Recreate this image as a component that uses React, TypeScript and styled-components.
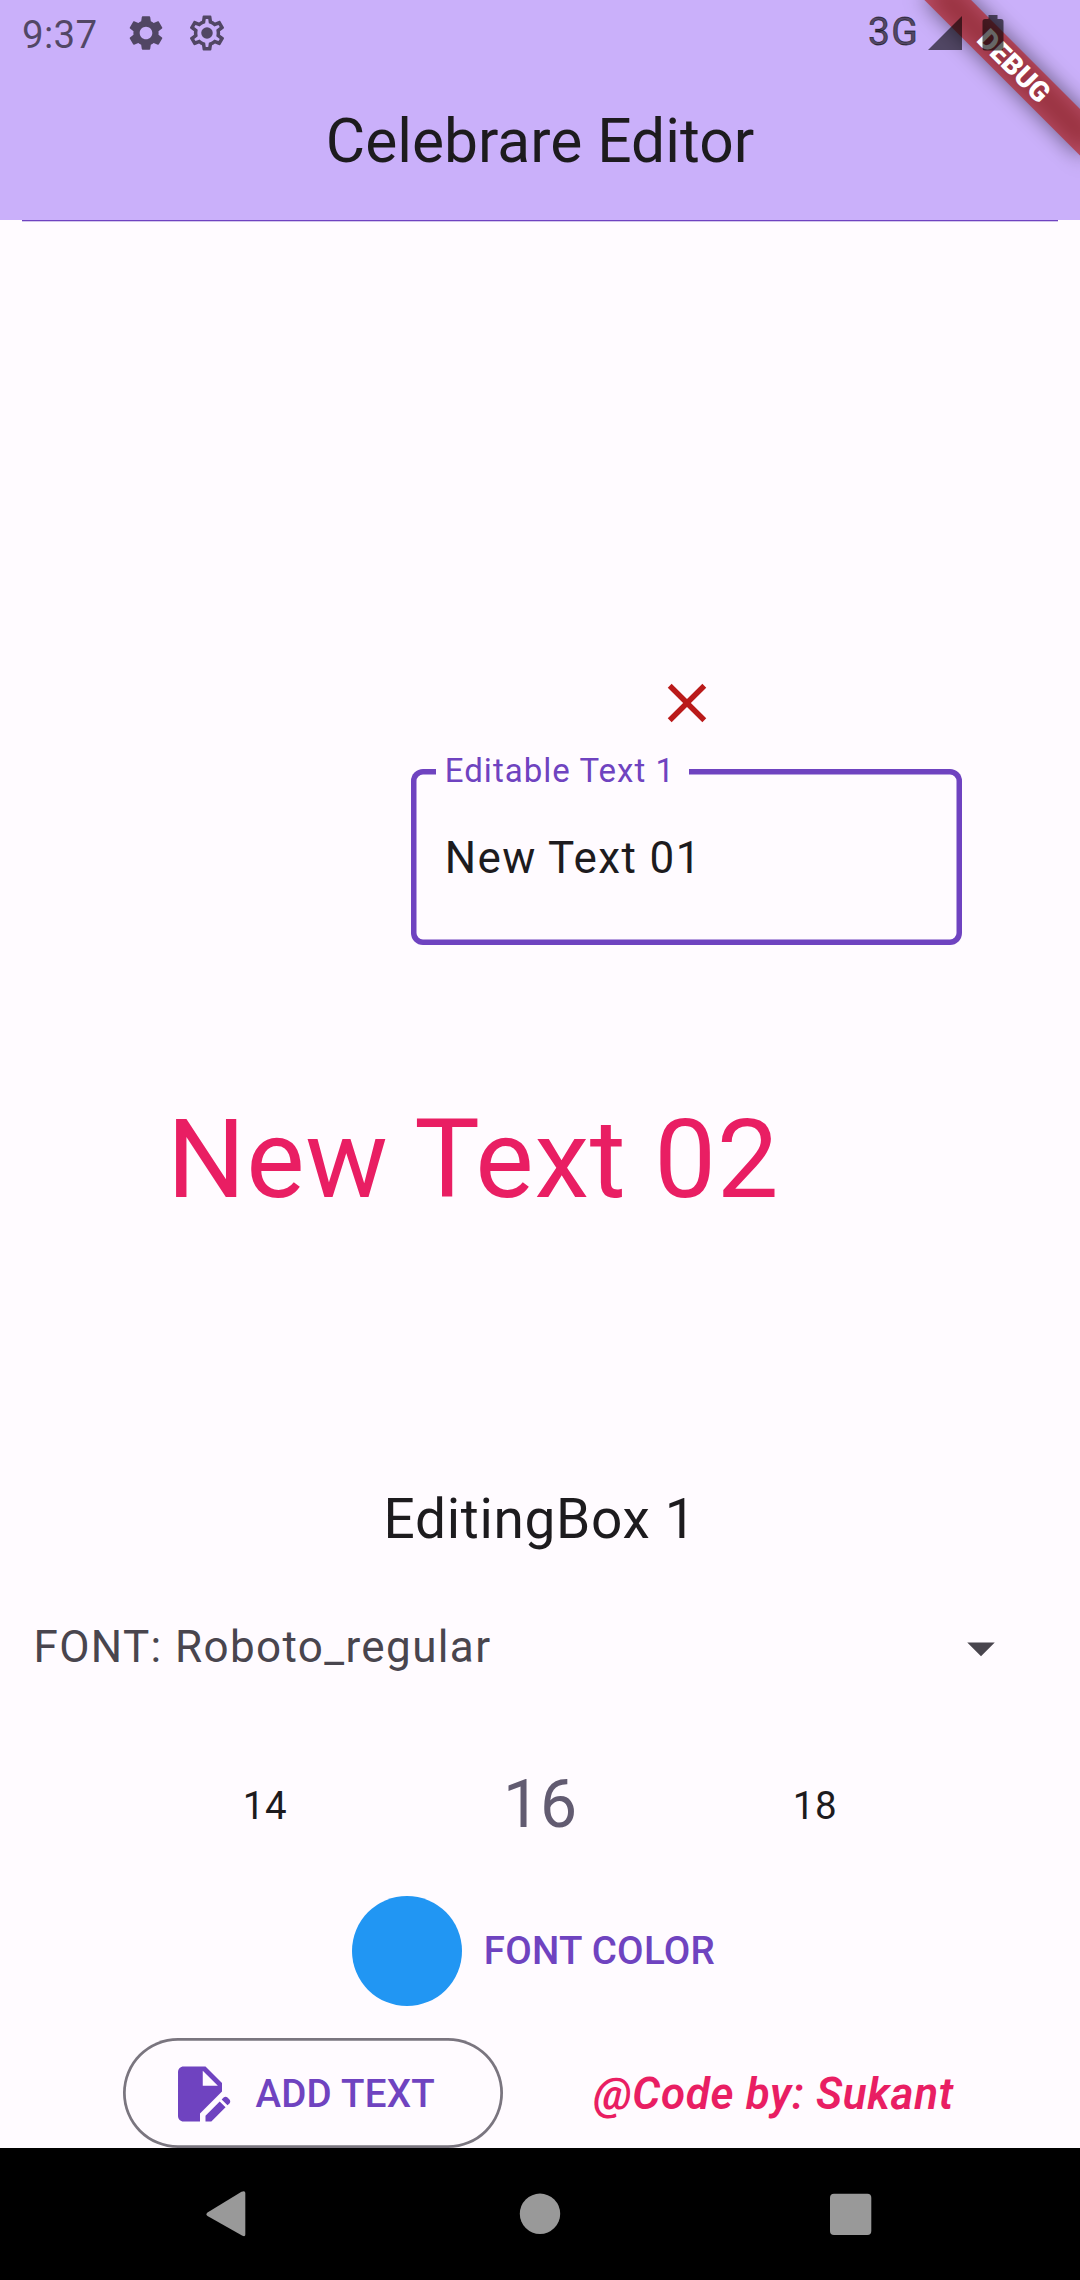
import React from "react";
import styled, { createGlobalStyle } from "styled-components";

const primary = "#6f43c0";
const ink = "#1d1b1e";
const system = "rgba(0, 0, 0, 0.6)";

const GlobalStyle = createGlobalStyle`
  * { box-sizing: border-box; }
  body { margin: 0; background: #fffbff; }
`;

const Screen = styled.div`
  position: relative;
  width: 1080px;
  height: 2280px;
  display: flex;
  flex-direction: column;
  overflow: hidden;
  background: #fffbff;
  color: ${ink};
  font-family: Roboto, "Liberation Sans", sans-serif;
`;

const Header = styled.header`
  height: 220px;
  flex: none;
  display: flex;
  flex-direction: column;
  background: #cab0fa;
`;

const StatusBar = styled.div`
  position: relative;
  z-index: 3;
  height: 66px;
  display: flex;
  align-items: flex-start;
  padding: 0 76px 0 22px;
  color: ${system};
`;

const Clock = styled.span`
  width: 103px;
  line-height: 69px;
  font-size: 38.5px;
  letter-spacing: 0.3px;
`;

const StatusIcon = styled.svg`
  width: 42px;
  height: 42px;
  margin: 12.4px 19px 0 0;
  fill: currentColor;
`;

const Network = styled.span`
  margin-left: auto;
  margin-right: 9px;
  line-height: 65px;
  font-size: 39px;
  letter-spacing: 1.2px;
  -webkit-text-stroke: 0.8px currentColor;
`;

const Signal = styled.svg`
  width: 34px;
  height: 34px;
  margin: 16px 20px 0 0;
  fill: currentColor;
`;

const Battery = styled.svg`
  width: 22px;
  height: 36px;
  margin-top: 15px;
  fill: currentColor;
`;

const Title = styled.h1`
  margin: 0;
  line-height: 152px;
  text-align: center;
  font-size: 60.5px;
  font-weight: 400;
`;

const Ribbon = styled.div`
  position: absolute;
  z-index: 2;
  left: 970px;
  top: 77px;
  width: 220px;
  height: 33px;
  transform-origin: 110px -77px;
  transform: rotate(45deg);
`;

const RibbonShadow = styled.div`
  position: absolute;
  inset: 0;
  background: rgba(0, 0, 0, 0.5);
  filter: blur(10.9px);
`;

const RibbonLabel = styled.div`
  position: relative;
  height: 33px;
  line-height: 33px;
  text-align: center;
  color: #fff;
  background: rgba(183, 28, 28, 0.63);
  font-size: 28.05px;
  font-weight: 900;
`;

const Divider = styled.div`
  flex: none;
  height: 2px;
  margin: 0 22px;
  background: linear-gradient(${primary} 50%, #d4c5ed 50%);
`;

const Canvas = styled.main`
  position: relative;
  flex: none;
  height: 1258px;
`;

const Removable = styled.div`
  position: absolute;
  left: 411.25px;
  top: 448px;
  width: 550.5px;
  display: flex;
  flex-direction: column;
  align-items: center;
  gap: 33px;
`;

const ClearIcon = styled.svg`
  width: 66px;
  height: 66px;
  fill: #ba1a1a;
`;

const Field = styled.div`
  position: relative;
  width: 100%;
  height: 176px;
  box-shadow: inset 0 0 0 5.5px ${primary};
  border-radius: 12px;
  padding: 0 33.5px;
  line-height: 179px;
  font-size: 44px;
  letter-spacing: 1.375px;
`;

const FieldLabel = styled.span`
  position: absolute;
  left: 25px;
  top: -16px;
  width: 253px;
  padding-left: 8.5px;
  line-height: 36px;
  white-space: nowrap;
  background: #fffbff;
  color: ${primary};
  font-size: 33px;
  letter-spacing: 1.03px;
`;

const CanvasText = styled.span`
  position: absolute;
  left: 167px;
  top: 873px;
  line-height: 130px;
  white-space: nowrap;
  color: #e91e63;
  font-size: 110px;
  letter-spacing: 0.69px;
`;

const Panel = styled.section`
  flex: none;
  height: 668px;
  display: flex;
  flex-direction: column;
`;

const PanelTitle = styled.h2`
  margin: 0 0 23px;
  line-height: 78px;
  text-align: center;
  font-size: 55px;
  font-weight: 400;
  letter-spacing: 0.69px;
`;

const FontSelect = styled.div`
  height: 132px;
  padding: 0 66px 0 33.5px;
  display: flex;
  align-items: center;
  justify-content: space-between;
  color: #49454e;
  font-size: 44px;
  letter-spacing: 1.375px;
`;

const ArrowIcon = styled.svg`
  width: 66px;
  height: 66px;
  margin-top: 2px;
  fill: #49454e;
`;

const SizePicker = styled.div`
  width: 825px;
  height: 182px;
  margin: 0 auto;
  display: grid;
  grid-template-columns: repeat(3, 1fr);
`;

const Size = styled.span<{ $active?: boolean }>`
  text-align: center;
  line-height: ${(p) => (p.$active ? "184px" : "186px")};
  color: ${(p) => (p.$active ? "#625b71" : ink)};
  font-size: ${(p) => (p.$active ? "66px" : "38.5px")};
  letter-spacing: ${(p) => (p.$active ? "0" : "0.69px")};
`;

const ColorRow = styled.div`
  height: 110px;
  margin-bottom: 33px;
  padding-left: 351.7px;
  display: flex;
  align-items: center;
  gap: 22px;
`;

const Swatch = styled.span`
  width: 110px;
  height: 110px;
  margin-top: 1.4px;
  border-radius: 50%;
  background: #2196f3;
`;

const ButtonLabel = styled.span`
  line-height: 110px;
  padding-top: 2px;
  color: ${primary};
  font-size: 38.5px;
  font-weight: 500;
  letter-spacing: 0.275px;
`;

const Footer = styled.div`
  height: 110px;
  padding-left: 123.4px;
  display: flex;
  align-items: center;
`;

const AddButton = styled.button`
  width: 379.5px;
  height: 110px;
  margin: 0.8px 90.5px 0 0;
  padding: 0 0 0 44px;
  display: flex;
  align-items: center;
  gap: 22px;
  border: none;
  box-shadow: inset 0 0 0 2.75px #7a757f;
  border-radius: 55px;
  background: none;
  font-family: inherit;
`;

const EditIcon = styled.svg`
  width: 66px;
  height: 66px;
  margin-top: 0.5px;
  fill: ${primary};
`;

const Credit = styled.span`
  line-height: 110px;
  padding-top: 2px;
  white-space: nowrap;
  color: #e91e63;
  font-size: 44px;
  font-style: italic;
  font-weight: 600;
  letter-spacing: 0.69px;
`;

const NavBar = styled.nav`
  position: relative;
  flex: none;
  height: 132px;
  padding: 0 206px;
  display: flex;
  align-items: center;
  justify-content: space-between;
  background: #000;
`;

const NavIcon = styled.svg`
  width: 46px;
  height: 46px;
  fill: #999;
`;

const gear =
  "M19.14 12.94c.04-.3.06-.61.06-.94 0-.32-.02-.64-.07-.94l2.03-1.58c.18-.14.23-.41.12-.61l-1.92-3.32c-.12-.22-.37-.29-.59-.22l-2.39.96c-.5-.38-1.03-.7-1.62-.94l-.36-2.54c-.04-.24-.24-.41-.48-.41h-3.84c-.24 0-.43.17-.47.41l-.36 2.54c-.59.24-1.13.57-1.62.94l-2.39-.96c-.22-.08-.47 0-.59.22L2.74 8.87c-.12.21-.08.47.12.61l2.03 1.58c-.05.3-.09.63-.09.94s.02.64.07.94l-2.03 1.58c-.18.14-.23.41-.12.61l1.92 3.32c.12.22.37.29.59.22l2.39-.96c.5.38 1.03.7 1.62.94l.36 2.54c.05.24.24.41.48.41h3.84c.24 0 .44-.17.47-.41l.36-2.54c.59-.24 1.13-.56 1.62-.94l2.39.96c.22.08.47 0 .59-.22l1.92-3.32c.12-.22.07-.47-.12-.61l-2.01-1.58zM12 15.6c-1.98 0-3.6-1.62-3.6-3.6s1.62-3.6 3.6-3.6 3.6 1.62 3.6 3.6-1.62 3.6-3.6 3.6z";

const gearOutline =
  "M19.43 12.98c.04-.32.07-.64.07-.98 0-.34-.03-.66-.07-.98l2.11-1.65c.19-.15.24-.42.12-.64l-2-3.46c-.09-.16-.26-.25-.44-.25-.06 0-.12.01-.17.03l-2.49 1c-.52-.4-1.08-.73-1.69-.98l-.38-2.65C14.46 2.18 14.25 2 14 2h-4c-.25 0-.46.18-.49.42l-.38 2.65c-.61.25-1.17.59-1.69.98l-2.49-1c-.06-.02-.12-.03-.18-.03-.17 0-.34.09-.43.25l-2 3.46c-.13.22-.07.49.12.64l2.11 1.65c-.04.32-.07.65-.07.98 0 .33.03.66.07.98l-2.11 1.65c-.19.15-.24.42-.12.64l2 3.46c.09.16.26.25.44.25.06 0 .12-.01.17-.03l2.49-1c.52.4 1.08.73 1.69.98l.38 2.65c.03.24.24.42.49.42h4c.25 0 .46-.18.49-.42l.38-2.65c.61-.25 1.17-.59 1.69-.98l2.49 1c.06.02.12.03.18.03.17 0 .34-.09.43-.25l2-3.46c.12-.22.07-.49-.12-.64l-2.11-1.65zm-1.98-1.71c.04.31.05.52.05.73 0 .21-.02.43-.05.73l-.14 1.13.89.7 1.08.84-.7 1.21-1.27-.51-1.04-.42-.9.68c-.43.32-.84.56-1.25.73l-1.06.43-.16 1.13-.2 1.35h-1.4l-.19-1.35-.16-1.13-1.06-.43c-.43-.18-.83-.41-1.23-.71l-.91-.7-1.06.43-1.27.51-.7-1.21 1.08-.84.89-.7-.14-1.13c-.03-.31-.05-.54-.05-.74s.02-.43.05-.73l.14-1.13-.89-.7-1.08-.84.7-1.21 1.27.51 1.04.42.9-.68c.43-.32.84-.56 1.25-.73l1.06-.43.16-1.13.2-1.35h1.39l.19 1.35.16 1.13 1.06.43c.43.18.83.41 1.23.71l.91.7 1.06-.43 1.27-.51.7 1.21-1.07.85-.89.7.14 1.13z";

const editDocument =
  "M14 19.88V22h2.12l5.17-5.17-2.12-2.12L14 19.88zM20 8l-6-6H6c-1.1 0-1.99.9-1.99 2L4 20c0 1.1.89 2 1.99 2H12v-2.95l8-8V8zM13 9V3.5L18.5 9H13zM22.71 14l-.71-.71c-.39-.39-1.02-.39-1.41 0l-.71.71L22 16.12l.71-.71c.39-.39.39-1.02 0-1.41z";

export default function App() {
  return (
    <>
      <GlobalStyle />
      <Screen>
        <Header>
          <StatusBar>
            <Clock>9:37</Clock>
            <StatusIcon viewBox="0 0 24 24">
              <path d={gear} />
            </StatusIcon>
            <StatusIcon viewBox="0 0 24 24">
              <path d={gearOutline} />
              <circle cx="12" cy="12" r="3.3" />
            </StatusIcon>
            <Network>3G</Network>
            <Signal viewBox="0 0 34 34">
              <path d="M0 34 34 0v34z" />
            </Signal>
            <Battery viewBox="0 0 22 36">
              <path d="M6.5 0h9v4H19q2.5 0 2.5 2.5V33q0 2.5-2.5 2.5H3Q.5 35.5.5 33V6.5Q.5 4 3 4h3.5z" />
            </Battery>
          </StatusBar>
          <Title>Celebrare Editor</Title>
        </Header>
        <Divider />
        <Canvas>
          <Removable>
            <ClearIcon viewBox="0 0 24 24">
              <path d="M19 6.41 17.59 5 12 10.59 6.41 5 5 6.41 10.59 12 5 17.59 6.41 19 12 13.41 17.59 19 19 17.59 13.41 12z" />
            </ClearIcon>
            <Field>
              <FieldLabel>Editable Text 1</FieldLabel>
              New Text 01
            </Field>
          </Removable>
          <CanvasText>New Text 02</CanvasText>
        </Canvas>
        <Panel>
          <PanelTitle>EditingBox 1</PanelTitle>
          <FontSelect>
            FONT: Roboto_regular
            <ArrowIcon viewBox="0 0 24 24">
              <path d="m7 10 5 5 5-5z" />
            </ArrowIcon>
          </FontSelect>
          <SizePicker>
            <Size>14</Size>
            <Size $active>16</Size>
            <Size>18</Size>
          </SizePicker>
          <ColorRow>
            <Swatch />
            <ButtonLabel>FONT COLOR</ButtonLabel>
          </ColorRow>
          <Footer>
            <AddButton>
              <EditIcon viewBox="0 0 24 24">
                <path d={editDocument} />
              </EditIcon>
              <ButtonLabel>ADD TEXT</ButtonLabel>
            </AddButton>
            <Credit>@Code by: Sukant</Credit>
          </Footer>
        </Panel>
        <NavBar>
          <NavIcon viewBox="0 0 46 46">
            <path d="M1.5 21.5 35.5.8Q39.3-.8 39.3 2V43.5Q39.3 46.3 36 44.5L1.5 25Q-.5 23.2 1.5 21.5z" />
          </NavIcon>
          <NavIcon viewBox="0 0 46 46">
            <circle cx="23" cy="22.8" r="20.2" />
          </NavIcon>
          <NavIcon viewBox="0 0 46 46">
            <rect x="2" y="2.8" width="41.3" height="41.3" rx="4" />
          </NavIcon>
        </NavBar>
        <Ribbon>
          <RibbonShadow />
          <RibbonLabel>DEBUG</RibbonLabel>
        </Ribbon>
      </Screen>
    </>
  );
}
